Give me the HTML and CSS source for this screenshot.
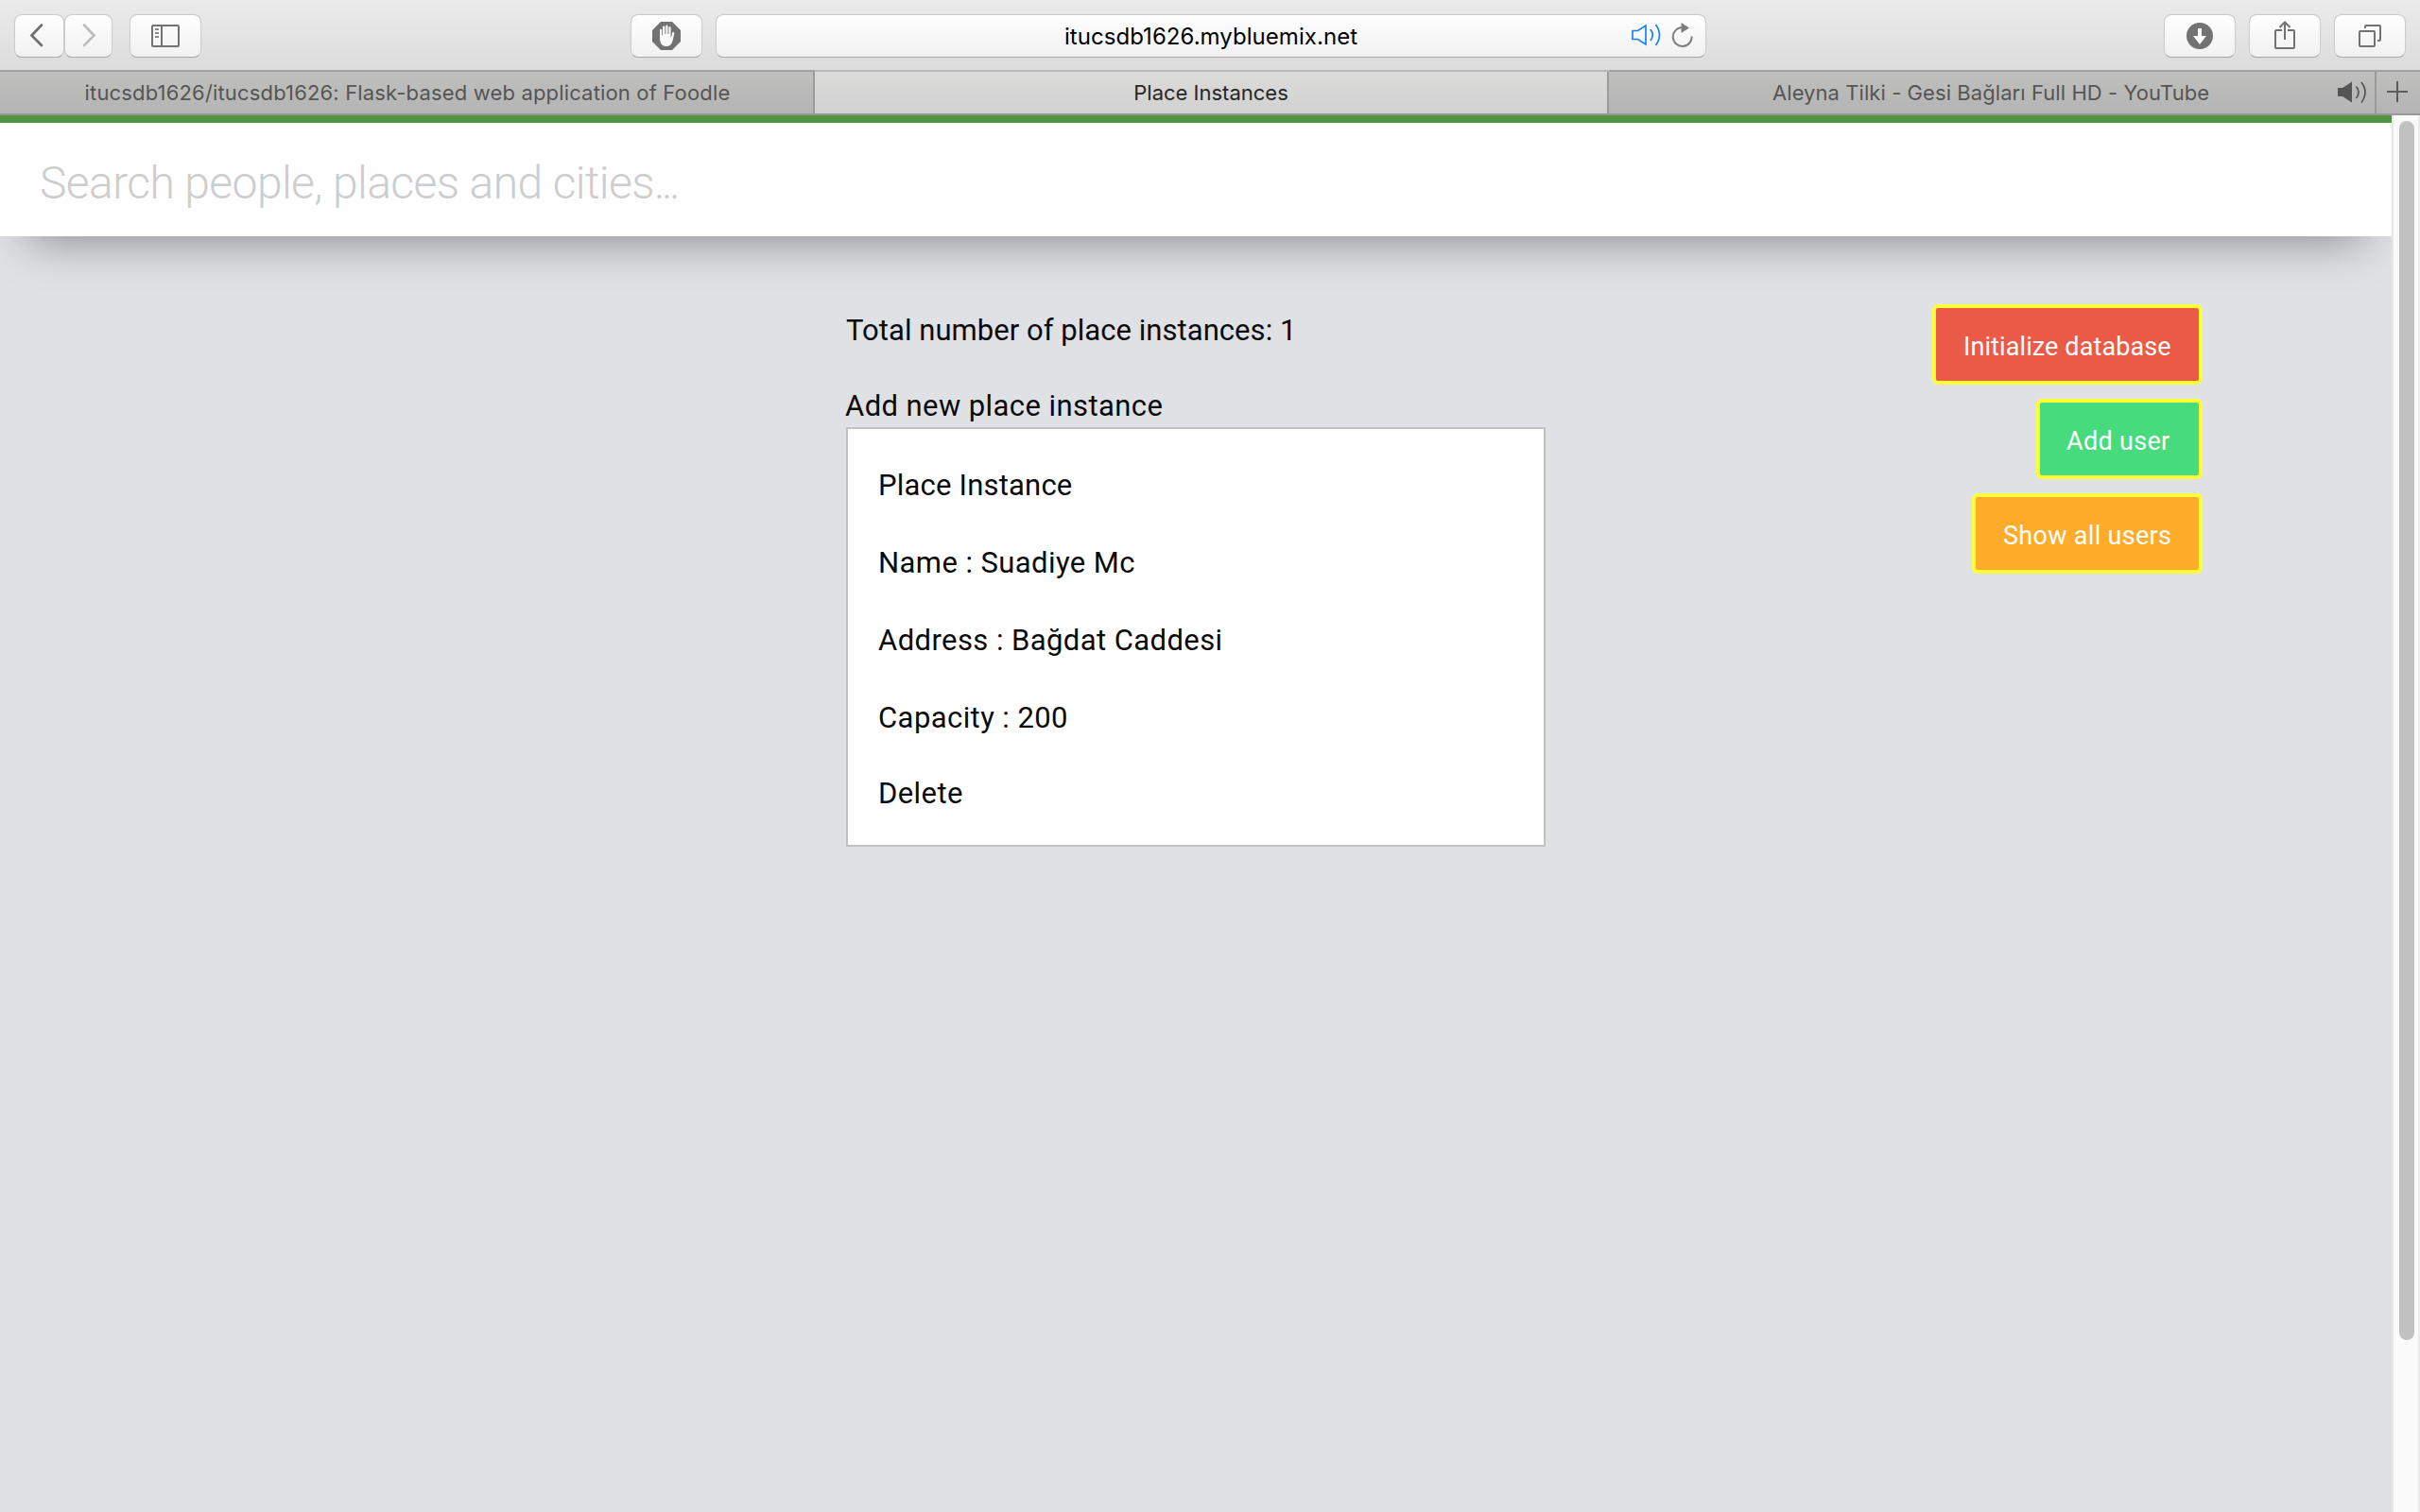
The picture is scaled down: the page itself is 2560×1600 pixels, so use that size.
FILE: index.html
```html
<!DOCTYPE html>
<html lang="en">
<head>
<meta charset="utf-8">
<title>Place Instances</title>
<link rel="stylesheet" href="styles.css">
</head>
<body>
<header class="toolbar">
  <div class="group nav">
    <button class="btn back" aria-label="Back"><svg width="51" height="44" viewBox="0 0 51 44"><path d="M28 10.5 17.5 21.5 28 32" fill="none" stroke="#6f6f6f" stroke-width="2.7" stroke-linecap="round"/></svg></button>
    <button class="btn forward" aria-label="Forward"><svg width="49" height="44" viewBox="0 0 49 44"><path d="M20 10.5 30.5 21.5 20 32" fill="none" stroke="#bdbdbd" stroke-width="2.7" stroke-linecap="round"/></svg></button>
    <button class="btn sidebar" aria-label="Sidebar"><svg width="30" height="24" viewBox="0 0 30 24"><g fill="none" stroke="#727272" stroke-width="2"><rect x="1" y="1" width="28" height="22" rx="1"/><path d="M11 1v22"/><path d="M4 5h4M4 9h4M4 13h4" stroke="#8a8a8a" stroke-width="1.8"/></g></svg></button>
  </div>
  <button class="btn blocker" aria-label="Blocker"><svg width="30" height="30" viewBox="0 0 30 30"><path d="M9 0h12l9 9v12l-9 9H9l-9-9V9z" fill="#727272"/><path d="M8 9q0-1.200 1.100-1.200T10.200 9v5h.8V5.600q0-1.200 1.200-1.200t1.200 1.200V13h.9V4.800q0-1.200 1.100-1.200t1.100 1.200V13h.9V6.200q0-1.200 1.100-1.200t1.100 1.200V16.500q.8-.5 1-2l.5-2.500q.4-1.400 1.400-1.100 1 .3.800 1.600l-1.700 7.500Q20 26 15 26q-4.500 0-6-3.500-1-2-1-5z" fill="#f9f9f9"/></svg></button>
  <div class="address">
    <span class="url">itucsdb1626.mybluemix.net</span>
    <span class="address-icons">
      <svg width="32" height="26" viewBox="0 0 32 26"><g fill="none" stroke="#1a80fb" stroke-width="1.700"><path d="M1 8.500h5.500L15 3v20l-8.500-5.500H1z"/><path d="M20 7q4.500 6 0 12M25.500 2q8 11 0 22"/></g></svg>
      <svg width="24" height="28" viewBox="0 0 24 28"><path d="M21.700 15.500A10 10 0 1 1 11.500 6" fill="none" stroke="#7d7d7d" stroke-width="2"/><path d="M10.500 1v11l8.500-5.500z" fill="#7d7d7d"/></svg>
    </span>
  </div>
  <div class="group tools">
    <button class="btn" aria-label="Downloads"><svg width="28" height="28" viewBox="0 0 28 28"><circle cx="14" cy="14" r="14" fill="#727272"/><path d="M12 6h4v8h5l-7 9-7-9h5z" fill="#fafafa"/></svg></button>
    <button class="btn share" aria-label="Share"><svg width="22" height="30" viewBox="0 0 22 30"><g fill="none" stroke="#727272" stroke-width="2"><path d="M8 10H2q-1 0-1 1v17q0 1 1 1h18q1 0 1-1V11q0-1-1-1h-6M11 20V1.500M5.500 7 11 1.500 16.500 7"/></g></svg></button>
    <button class="btn" aria-label="Show tabs"><svg width="24" height="24" viewBox="0 0 24 24"><g fill="none" stroke="#727272" stroke-width="2"><rect x="1" y="7" width="16" height="16" rx="1"/><path d="M7 4V2q0-1 1-1h14q1 0 1 1v14q0 1-1 1h-2"/></g></svg></button>
  </div>
</header>
<nav class="tabs">
  <div class="tab first"><span class="tab-repo">itucsdb1626/itucsdb1626: Flask-based web application of Foodle</span></div>
  <div class="tab active"><span>Place Instances</span></div>
  <div class="tab third"><span class="tab-video">Aleyna Tilki - Gesi Bağları Full HD - YouTube</span>
    <svg class="sound" width="32" height="24" viewBox="0 0 32 24"><path d="M0 7h5l10-6.500v22L5 16H0z" fill="#555"/><path d="M19.500 5.500q5 6 0 12.500M25 1q8 10.500 0 21.500" fill="none" stroke="#555" stroke-width="1.700"/></svg></div>
  <div class="tab plus"><svg width="22" height="22" viewBox="0 0 22 22"><path d="M11 0v22M0 11h22" stroke="#5c5c5c" stroke-width="2"/></svg></div>
</nav>
<div class="viewport">
  <div class="page">
    <div class="search"><span>Search people, places and cities<span class="dots">...</span></span></div>
    <div class="content">
      <main class="main">
        <p class="line total">Total number of place instances: 1</p>
        <p class="line add">Add new place instance</p>
        <section class="card">
          <p class="line title">Place Instance</p>
          <p class="line">Name : Suadiye Mc</p>
          <p class="line">Address : Bağdat Caddesi</p>
          <p class="line">Capacity : 200</p>
          <p class="line delete">Delete</p>
        </section>
      </main>
      <aside class="actions">
        <a class="action red">Initialize database</a>
        <a class="action green">Add user</a>
        <a class="action orange">Show all users</a>
      </aside>
    </div>
  </div>
  <div class="scrollbar"><div class="thumb"></div></div>
</div>
</body>
</html>
```

FILE: styles.css
```css
* { box-sizing: border-box; }
body { margin: 0; width: 2560px; height: 1600px; overflow: hidden; display: flex; flex-direction: column; background: #dfe1e5; font-family: Inter, "Liberation Sans", sans-serif; }
svg { display: block; flex: none; }
p { margin: 0; }

.toolbar { height: 76px; flex: none; display: flex; align-items: flex-start; padding: 15px 15px 0; background: linear-gradient(#ebebeb, #dcdcdc); border-bottom: 2px solid #a1a1a1; }
.group { display: flex; }
.btn, .address { height: 46px; border: 1px solid #cbcbcb; border-bottom-color: #a8a8a8; border-radius: 8px; background: linear-gradient(#fefefe, #f1f1f1); background-clip: padding-box; }
.btn { width: 76px; padding: 0; display: flex; align-items: center; justify-content: center; }
.nav { width: 652px; }
.back { width: 53px; }
.forward { width: 51px; }
.sidebar { margin-left: 18px; }
.address { width: 1048px; margin-left: 14px; display: grid; grid-template-columns: 1fr auto 1fr; align-items: center; }
.url { grid-column: 2; font-size: 24px; line-height: 42px; padding-top: 2px; letter-spacing: .05px; color: #000; }
.address-icons { grid-column: 3; justify-self: end; display: flex; align-items: center; gap: 10px; padding: 0 12px 2px 0; }
.tools { margin-left: auto; gap: 14px; }
.share svg { margin-bottom: 2px; }

.tabs { height: 46px; flex: none; display: grid; grid-template-columns: 862px 840px 812px 46px; font-size: 22px; color: #555; border-bottom: 2px solid #999; }
.tab { display: flex; align-items: center; justify-content: center; border-right: 2px solid #9b9b9b; background: linear-gradient(#bfbfbd, #b4b4b4); white-space: pre; }
.active { background: linear-gradient(#dbdbd9, #d1d1d1); color: #262626; box-shadow: 0 -2px #b8b8b8; }
.first { padding-left: 2px; }
.tab-repo { letter-spacing: .16px; }
.tab-video { letter-spacing: .07px; margin-left: 173px; }
.third { justify-content: flex-start; }
.sound { margin-left: auto; margin-right: 7px; }
.plus { border-right: 0; padding: 0 2px 2px 0; }

.viewport { flex: 1; display: flex; }
.page { width: 2530px; overflow: hidden; font-family: Roboto, "Liberation Sans", sans-serif; }
.search { height: 128px; border-top: 8px solid #4e9641; background: #fefefe; padding: 29px 42px 0; font-size: 48px; line-height: 70px; font-weight: 300; color: #cdcdcd; letter-spacing: -.6px; box-shadow: 0 34px 50px -30px rgba(0,0,0,.4); white-space: pre; }
.dots { letter-spacing: -3.5px; }
.content { display: flex; padding-top: 72px; }
.main { width: 740px; margin-left: 895px; padding-top: 8px; }
.line { font-size: 31px; line-height: 40px; color: #0a0a0a; letter-spacing: .42px; white-space: pre; }
.total { letter-spacing: .05px; }
.title { letter-spacing: .2px; }
.add { margin-top: 40px; margin-left: -1px; }
.card { margin-top: 2px; height: 444px; padding: 40px 32px 0; border: 2px solid #c1c1c1; background: #fff; display: flex; flex-direction: column; gap: 42px; }
.delete { margin-top: -2px; }
.actions { width: 695px; display: flex; flex-direction: column; align-items: flex-end; gap: 15px; }
.action { height: 85px; border: 4px solid #ffff38; border-radius: 6px; padding: 3px 0 0 29px; font-size: 27px; line-height: 77px; color: #fff; letter-spacing: .1px; white-space: pre; }
.red { width: 286px; background: #eb5a46; }
.green { width: 176px; background: #46db7c; letter-spacing: .3px; padding-left: 28px; }
.orange { width: 244px; background: #ffac2b; letter-spacing: .3px; }
.scrollbar { width: 30px; background: #fafafa; border-left: 2px solid #e7e7e7; border-right: 2px solid #ebebeb; padding: 6px 4px 0 6px; }
.thumb { width: 16px; height: 1290px; border-radius: 8px; background: #c1c1c1; }
```
